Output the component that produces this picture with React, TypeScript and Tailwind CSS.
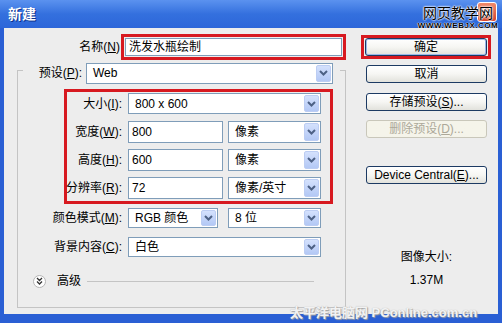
import React from 'react';

const font = { fontFamily: '"Liberation Sans", "Noto Sans CJK SC", sans-serif' };

const Chevron: React.FC = () => (
  <svg width="9" height="6" viewBox="0 0 9 6">
    <path d="M1 1 L4.5 4.5 L8 1" fill="none" stroke="#4d6185" strokeWidth="2" />
  </svg>
);

interface SelectProps {
  text: string;
  className: string;
}

const Select: React.FC<SelectProps> = ({ text, className }) => (
  <div className={`flex items-center bg-white border border-[#7f9db9] ${className}`}>
    <span className="flex-1 pl-[6px] whitespace-nowrap text-[12px] text-black">{text}</span>
    <div className="h-full w-[17px] p-[1px]">
      <div className="h-full w-full flex items-center justify-center rounded-[2px] bg-linear-to-b from-[#d4e1fd] to-[#b3c8f5] border border-[#bccdf3]">
        <Chevron />
      </div>
    </div>
  </div>
);

const Input: React.FC<{ text: string; className: string }> = ({ text, className }) => (
  <div className={`flex items-center bg-white border border-[#7f9db9] pl-[3px] text-[12px] text-black ${className}`}>
    {text}
  </div>
);

const Label: React.FC<{ children: React.ReactNode; className: string }> = ({ children, className }) => (
  <div className={`flex justify-end whitespace-nowrap text-[12px] text-black ${className}`}>{children}</div>
);

const Button: React.FC<{ children: React.ReactNode; disabled?: boolean; className?: string }> = ({ children, disabled, className = '' }) => (
  <div
    className={`flex items-center justify-center rounded-[3px] border text-[12px] whitespace-nowrap bg-linear-to-b ${
      disabled
        ? 'border-[#c9c7ba] text-[#aca899] from-[#f5f4ea] to-[#f5f4ea]'
        : 'border-[#1c3a63] text-black from-white via-[#f6f6f3] to-[#e2e2dc]'
    } ${className}`}
  >
    {children}
  </div>
);

const App: React.FC = () => {
  return (
    <div className="relative w-[502px] h-[323px] flex flex-col overflow-hidden bg-[#2a5fd4]" style={font}>
      {/* title bar */}
      <div className="h-[28px] flex items-center pl-[8px] bg-linear-to-b from-[#5b92ef] via-[#3470de] to-[#2d66d9]">
        <span className="text-white font-bold text-[14px] [text-shadow:1px_1px_0_#0b2f8a]">新建</span>
        <div className="ml-auto mr-[5px] mt-[-4px] w-[20px] h-[20px] rounded-[3px] border border-white bg-linear-to-b from-[#f08a6a] to-[#d8432a] flex items-center justify-center">
          <svg width="10" height="10" viewBox="0 0 10 10">
            <path d="M1.5 1.5 L8.5 8.5 M8.5 1.5 L1.5 8.5" stroke="#fff" strokeWidth="2" />
          </svg>
        </div>
      </div>

      {/* body */}
      <div className="flex-1 mx-[4px] mb-[9px] bg-[#ededed] flex">
        {/* left */}
        <div className="w-[342px] flex flex-col">
          <div className="mt-[6px] flex items-center">
            <Label className="w-[119px] pr-[1px]">
              名称(<u>N</u>)
            </Label>
            <div className="w-[229px] h-[26px] border-[3px] border-[#d71920] p-[1px]">
              <Input text="洗发水瓶绘制" className="w-full h-full pl-[3px]" />
            </div>
          </div>

          <div className="mt-[10px] ml-[13px] w-[329px] h-[238px] border border-[#c4c4c4] flex flex-col">
            <div className="mt-[-9px] ml-[5px] w-[317px] h-[22px] bg-[#ededed] flex items-center">
              <Label className="w-[63px] pr-[4px]">
                预设(<u>P</u>):
              </Label>
              <Select text="Web" className="w-[247px] h-[21px]" />
            </div>

            <div className="mt-[5px] ml-[46px] w-[269px] border-[3px] border-[#d71920] pt-[1px] pb-[3px] flex flex-col gap-[7px]">
              <div className="h-[21px] flex items-center">
                <Label className="w-[55px]">
                  大小(<u>I</u>):
                </Label>
                <Select text="800 x 600" className="ml-[6px] w-[193px] h-[21px]" />
              </div>
              <div className="h-[21px] flex items-center">
                <Label className="w-[55px]">
                  宽度(<u>W</u>):
                </Label>
                <Input text="800" className="ml-[6px] w-[95px] h-[22px]" />
                <Select text="像素" className="ml-[5px] w-[93px] h-[22px]" />
              </div>
              <div className="h-[21px] flex items-center">
                <Label className="w-[55px]">
                  高度(<u>H</u>):
                </Label>
                <Input text="600" className="ml-[6px] w-[95px] h-[22px]" />
                <Select text="像素" className="ml-[5px] w-[93px] h-[22px]" />
              </div>
              <div className="h-[21px] flex items-center">
                <Label className="w-[55px]">
                  分辨率(<u>R</u>):
                </Label>
                <Input text="72" className="ml-[6px] w-[95px] h-[22px]" />
                <Select text="像素/英寸" className="ml-[5px] w-[93px] h-[22px]" />
              </div>
            </div>

            <div className="mt-[4px] h-[20px] flex items-center">
              <Label className="w-[104px]">
                颜色模式(<u>M</u>):
              </Label>
              <Select text="RGB 颜色" className="ml-[6px] w-[90px] h-[20px]" />
              <Select text="8 位" className="ml-[10px] w-[93px] h-[20px]" />
            </div>
            <div className="mt-[9px] h-[20px] flex items-center">
              <Label className="w-[104px]">
                背景内容(<u>C</u>):
              </Label>
              <Select text="白色" className="ml-[6px] w-[193px] h-[20px]" />
            </div>

            <div className="mt-[16px] h-[16px] flex items-center">
              <div className="ml-[15px] w-[13px] h-[13px] rounded-full border border-[#b5b5b5] bg-white flex items-center justify-center">
                <svg width="7" height="8" viewBox="0 0 7 8">
                  <path d="M1 1 L3.5 3.5 L6 1 M1 4.5 L3.5 7 L6 4.5" fill="none" stroke="#333" strokeWidth="1.3" />
                </svg>
              </div>
              <span className="ml-[11px] text-[12px] text-black">高级</span>
              <div className="ml-[6px] w-[227px] h-px bg-[#c4c4c4]" />
            </div>
          </div>
        </div>

        {/* right */}
        <div className="flex-1 flex flex-col">
          <div className="mt-[7px] ml-[15px] w-[130px] h-[24px] border-[3px] border-[#d71920] pl-[1px]">
            <Button className="w-[122px] h-full shadow-[inset_0_0_0_1px_#9bb9ea]">确定</Button>
          </div>
          <Button className="mt-[6px] ml-[20px] w-[121px] h-[18px]">取消</Button>
          <Button className="mt-[10px] ml-[20px] w-[121px] h-[18px]">
            存储预设(<u>S</u>)...
          </Button>
          <Button disabled className="mt-[9px] ml-[20px] w-[121px] h-[18px]">
            删除预设(<u>D</u>)...
          </Button>
          <Button className="mt-[28px] ml-[20px] w-[121px] h-[18px]">
            Device Central(<u>E</u>)...
          </Button>
          <div className="mt-[66px] ml-[20px] w-[121px] text-center text-[12px] leading-[14px] text-black">图像大小:</div>
          <div className="mt-[9px] ml-[20px] w-[121px] text-center text-[12px] leading-[14px] text-black">1.37M</div>
        </div>
      </div>

      {/* watermarks */}
      <div className="absolute left-[420px] top-[6px] w-[76px] flex flex-col items-center leading-none whitespace-nowrap">
        <span className="text-[14px] text-black [text-shadow:0_0_2px_#fff,0_0_2px_#fff,0_0_2px_#fff]">网页教学网</span>
        <span className="mt-[2px] text-[8px] font-bold tracking-[0.5px] text-black [text-shadow:0_0_1px_#fff,0_0_1px_#fff,0_0_1px_#fff]">
          WWW.WEBJX.COM
        </span>
      </div>
      <div className="absolute left-[290px] top-[303px] text-[13px] font-bold whitespace-nowrap text-[#f2f2f2] [text-shadow:0_0_1px_#b0b0b0,1px_1px_1px_#a0a0a0]">
        太平洋电脑网 PConline.com.cn
      </div>
    </div>
  );
};

export default App;
